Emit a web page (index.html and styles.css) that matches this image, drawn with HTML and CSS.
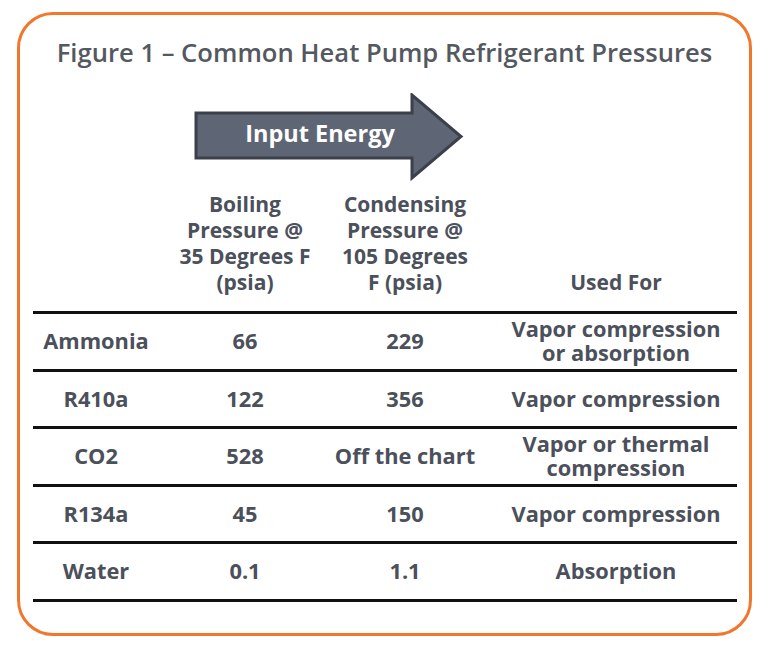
FILE: index.html
```html
<!DOCTYPE html>
<html lang="en">
<head>
<meta charset="utf-8">
<title>Figure 1 – Common Heat Pump Refrigerant Pressures</title>
<link rel="stylesheet" href="styles.css">
</head>
<body>
<div class="card">
  <h1 class="title">Figure 1 – Common Heat Pump Refrigerant Pressures</h1>
  <svg class="arrow" width="270" height="88" viewBox="0 0 270 88">
    <path d="M2 20 H218 V2 L267 43.5 L218 85 V65 H2 Z" fill="#5e6574" stroke="#3b404a" stroke-width="3"/>
    <text x="126" y="40" class="arrow-text" text-anchor="middle" dominant-baseline="central">Input Energy</text>
  </svg>
  <div class="table">
    <div class="row head">
      <div class="cell"></div>
      <div class="cell">Boiling<br>Pressure @<br>35 Degrees F<br>(psia)</div>
      <div class="cell">Condensing<br>Pressure @<br>105 Degrees<br>F (psia)</div>
      <div class="cell used">Used For</div>
    </div>
    <div class="row">
      <div class="cell">Ammonia</div>
      <div class="cell">66</div>
      <div class="cell">229</div>
      <div class="cell used">Vapor compression<br>or absorption</div>
    </div>
    <div class="row">
      <div class="cell">R410a</div>
      <div class="cell">122</div>
      <div class="cell">356</div>
      <div class="cell used">Vapor compression</div>
    </div>
    <div class="row">
      <div class="cell">CO2</div>
      <div class="cell">528</div>
      <div class="cell">Off the chart</div>
      <div class="cell used">Vapor or thermal<br>compression</div>
    </div>
    <div class="row">
      <div class="cell">R134a</div>
      <div class="cell">45</div>
      <div class="cell">150</div>
      <div class="cell used">Vapor compression</div>
    </div>
    <div class="row last">
      <div class="cell">Water</div>
      <div class="cell">0.1</div>
      <div class="cell">1.1</div>
      <div class="cell used">Absorption</div>
    </div>
  </div>
</div>
</body>
</html>
```

FILE: styles.css
```css
* { box-sizing: border-box; }
html, body { margin: 0; padding: 0; background: #ffffff; }
body {
  padding: 12px 0 0 17px;
  font-family: "Open Sans", "Liberation Sans", sans-serif;
  color: #4b505b;
}
.card {
  width: 735px;
  height: 624px;
  border: 3px solid #f0772b;
  border-radius: 36px;
  padding: 23px 0 0 13px;
}
.title {
  margin: 0;
  padding-right: 13px;
  font-size: 25.6px;
  font-weight: 600;
  line-height: 30px;
  text-align: center;
  color: #54585f;
  white-space: nowrap;
}
.arrow {
  display: block;
  margin: 25px 0 0 161px;
}
.arrow-text {
  font-family: "Open Sans", "Liberation Sans", sans-serif;
  font-size: 23.5px;
  font-weight: 700;
  fill: #ffffff;
}
.table {
  margin-top: 10px;
  width: 704px;
}
.row {
  display: grid;
  grid-template-columns: 126px 172px 148px 258px;
  align-items: center;
  height: 57.5px;
  border-top: 3px solid #111111;
  font-size: 21.8px;
  font-weight: 700;
  line-height: 24px;
}
.row.last { border-bottom: 3px solid #111111; height: 60.5px; }
.row.head {
  border-top: 0;
  height: 120px;
  align-items: end;
  padding-bottom: 16px;
  line-height: 26px;
  font-size: 21px;
}
.cell { text-align: center; }
.used { padding-left: 16px; }
```
